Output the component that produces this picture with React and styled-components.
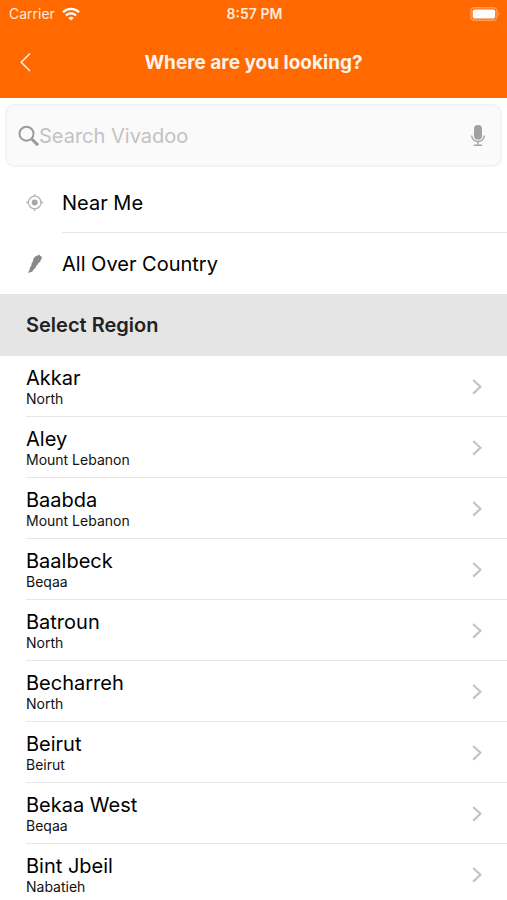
import React, { useState } from "react";
import styled, { createGlobalStyle } from "styled-components";

const GlobalStyle = createGlobalStyle`
  * { box-sizing: border-box; }
  html { scrollbar-width: none; }
  body {
    margin: 0;
    background: #fff;
    color: #111;
    font-family: Inter, "Liberation Sans", sans-serif;
  }
  button, input { font: inherit; color: inherit; }
`;

const Header = styled.header`
  height: 98px;
  background: #ff6900;
  color: #fff;
`;
const StatusBar = styled.div`
  display: grid;
  grid-template-columns: 1fr auto 1fr;
  align-items: center;
  height: 27px;
  padding: 0 7px 0 9px;
  font-size: 14px;
  color: #ffeadb;
`;
const Carrier = styled.div`
  display: flex;
  align-items: center;
  gap: 7px;
`;
const Clock = styled.time`
  font-weight: 600;
`;
const Battery = styled.svg`
  justify-self: end;
`;
const NavBar = styled.div`
  display: grid;
  grid-template-columns: 52px 1fr 52px;
  align-items: center;
  height: 71px;
`;
const BackButton = styled.button`
  display: flex;
  align-items: center;
  height: 44px;
  padding: 0 0 0 20px;
  border: none;
  background: transparent;
  cursor: pointer;
`;
const Title = styled.h1`
  margin: 0;
  font-size: 19px;
  line-height: 24px;
  font-weight: 700;
  text-align: center;
  color: #fff3ea;
`;

const SearchBox = styled.form`
  display: flex;
  align-items: center;
  height: 63px;
  margin: 6px 5px 5px;
  padding: 0 11px;
  background: #fafafa;
  border: 2px solid #f3f3f3;
  border-radius: 9px;
`;
const SearchInput = styled.input`
  flex: 1;
  min-width: 0;
  padding: 0;
  border: none;
  outline: none;
  background: transparent;
  font-size: 20px;
  &::placeholder { color: #c2c2c2; opacity: 1; }
`;
const MicButton = styled.button`
  display: flex;
  padding: 4px;
  border: none;
  background: transparent;
  cursor: pointer;
`;

const List = styled.ul`
  margin: 0;
  padding: 0 0 0 ${(p) => p.$inset || "0"};
  list-style: none;
`;
const Option = styled.button`
  display: flex;
  width: 100%;
  height: 61px;
  padding: 0 0 0 26px;
  border: none;
  background: transparent;
  text-align: left;
  cursor: pointer;
`;
const OptionIcon = styled.span`
  display: flex;
  align-items: center;
  width: 36px;
`;
const OptionLabel = styled.span`
  display: flex;
  flex: 1;
  align-items: center;
  padding-top: 2px;
  font-size: 20px;
  color: #000;
  border-bottom: 1px solid ${(p) => (p.$divider ? "#e6e6e6" : "transparent")};
`;

const SectionTitle = styled.h2`
  margin: 0;
  padding: 1px 26px 0;
  background: #e5e5e5;
  color: #222;
  font-size: 20px;
  line-height: 61px;
  font-weight: 600;
`;

const RegionRow = styled.button`
  display: flex;
  align-items: center;
  justify-content: space-between;
  width: 100%;
  height: 61px;
  padding: 2px 24px 0 0;
  border: none;
  border-bottom: 1px solid #e6e6e6;
  background: transparent;
  text-align: left;
  cursor: pointer;
`;
const RegionName = styled.span`
  display: block;
  font-size: 20px;
  line-height: 24px;
  color: #000;
`;
const RegionArea = styled.span`
  display: block;
  font-size: 14px;
  line-height: 18px;
`;

const WifiIcon = () => (
  <svg viewBox="0 0 18 14" width="18" height="14" fill="none" stroke="#fff" strokeWidth="2.3" aria-hidden>
    <path d="M1 5.2a11.3 11.3 0 0 1 16 0" />
    <path d="M4 8.5a7 7 0 0 1 10 0" />
    <path d="M9 13.6 6.3 11a3.8 3.8 0 0 1 5.4 0z" fill="#fff" stroke="none" />
  </svg>
);

const BatteryIcon = () => (
  <Battery viewBox="0 0 30 14" width="30" height="14" role="img" aria-label="Battery full">
    <rect x="0.9" y="0.7" width="26" height="12.6" rx="3.5" fill="none" stroke="#ff9c58" strokeWidth="1.4" />
    <rect x="2.7" y="2.5" width="22.5" height="9" rx="1.8" fill="#fff" />
    <path d="M28.3 5c1.6.8 1.6 3.2 0 4z" fill="#ff9c58" />
  </Battery>
);

const BackIcon = () => (
  <svg viewBox="0 0 11 20" width="11" height="20" fill="none" stroke="#ffeadb" strokeWidth="1.6" aria-hidden>
    <path d="M10 .5 1.2 9.2l8.8 8.8" />
  </svg>
);

const SearchIcon = () => (
  <svg viewBox="0 0 21 22" width="21" height="22" fill="none" stroke="#9b9b9b" aria-hidden>
    <circle cx="8.5" cy="8.7" r="7" strokeWidth="2" />
    <path d="m13.5 13.8 6.5 6.4" strokeWidth="3" />
  </svg>
);

const MicIcon = () => (
  <svg viewBox="0 0 14 22" width="14" height="22" fill="none" stroke="#a3a3a3" strokeWidth="1.4" aria-hidden>
    <rect x="3" y="0" width="8" height="14.8" rx="4" fill="#a0a0a0" stroke="none" />
    <path d="M0.8 10.5v.6a6.2 5.4 0 0 0 12.4 0v-.6M7 16.5v3.7M3 20.3h8" />
  </svg>
);

const TargetIcon = () => (
  <svg viewBox="0 0 18 18" width="18" height="18" fill="none" stroke="#b5b5b5" strokeWidth="1.3" aria-hidden>
    <circle cx="8.7" cy="8.5" r="6.3" />
    <circle cx="8.7" cy="8.5" r="3" fill="#a8a8a8" stroke="none" />
    <path d="M8.7 0v2.6M8.7 14.4V17M.2 8.5h2.6M14.6 8.5h2.6" />
  </svg>
);

const CountryIcon = () => (
  <svg viewBox="0 0 18 20" width="18" height="20" fill="#888" aria-hidden>
    <path d="m8.6 3.1 1.2-.9 1.9-.8 1.6-.9.7 1.3 1.5.6.4 1.9-1.2 1.6-.3 1.6-2 1.4-.8 1.8-1.4 1.2-1 2.3-1.9 1.5-1 2.1-1.9.1-1.4 1-1-.4 1.4-2.2.4-2.4 1.5-2.3.4-2.7 1.3-1.6.2-2z" />
  </svg>
);

const ChevronIcon = () => (
  <svg viewBox="0 0 11 16" width="11" height="16" fill="none" stroke="#c4c4c6" strokeWidth="2.2" aria-hidden>
    <path d="m1.2 1 7.2 6.8-7.2 6.8" />
  </svg>
);

const regions = [
  { name: "Akkar", area: "North" },
  { name: "Aley", area: "Mount Lebanon" },
  { name: "Baabda", area: "Mount Lebanon" },
  { name: "Baalbeck", area: "Beqaa" },
  { name: "Batroun", area: "North" },
  { name: "Becharreh", area: "North" },
  { name: "Beirut", area: "Beirut" },
  { name: "Bekaa West", area: "Beqaa" },
  { name: "Bint Jbeil", area: "Nabatieh" },
];

const App = () => {
  const [query, setQuery] = useState("");
  const visible = regions.filter((r) =>
    r.name.toLowerCase().includes(query.trim().toLowerCase())
  );

  return (
    <>
      <GlobalStyle />
      <Header>
        <StatusBar>
          <Carrier>
            Carrier
            <WifiIcon />
          </Carrier>
          <Clock>8:57 PM</Clock>
          <BatteryIcon />
        </StatusBar>
        <NavBar>
          <BackButton aria-label="Back">
            <BackIcon />
          </BackButton>
          <Title>Where are you looking?</Title>
        </NavBar>
      </Header>
      <main>
        <SearchBox role="search" onSubmit={(e) => e.preventDefault()}>
          <SearchIcon />
          <SearchInput
            type="text"
            aria-label="Search Vivadoo"
            placeholder="Search Vivadoo"
            value={query}
            onChange={(e) => setQuery(e.target.value)}
          />
          <MicButton type="button" aria-label="Voice search">
            <MicIcon />
          </MicButton>
        </SearchBox>
        <List>
          <li>
            <Option>
              <OptionIcon><TargetIcon /></OptionIcon>
              <OptionLabel $divider>Near Me</OptionLabel>
            </Option>
          </li>
          <li>
            <Option>
              <OptionIcon><CountryIcon /></OptionIcon>
              <OptionLabel>All Over Country</OptionLabel>
            </Option>
          </li>
        </List>
        <SectionTitle>Select Region</SectionTitle>
        <List $inset="26px">
          {visible.map((r) => (
            <li key={r.name}>
              <RegionRow>
                <span>
                  <RegionName>{r.name}</RegionName>
                  <RegionArea>{r.area}</RegionArea>
                </span>
                <ChevronIcon />
              </RegionRow>
            </li>
          ))}
        </List>
      </main>
    </>
  );
};

export default App;
